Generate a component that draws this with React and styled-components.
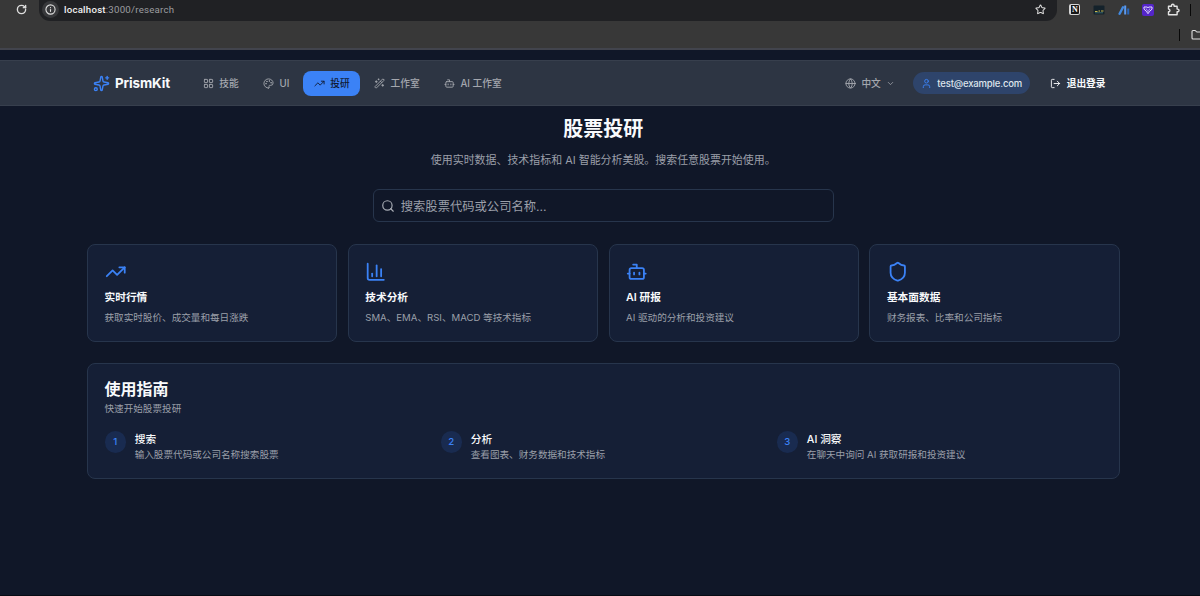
import React from "react";
import styled, { createGlobalStyle } from "styled-components";
import {
  Bot,
  ChartColumn,
  ChevronDown,
  Folder,
  Globe,
  Info,
  LayoutGrid,
  LogOut,
  Palette,
  RotateCw,
  Search,
  Shield,
  Sparkles,
  Star,
  TrendingUp,
  User,
  WandSparkles,
} from "lucide-react";

const colors = {
  page: "#101728",
  header: "#2d3543",
  card: "#151f36",
  border: "#27354c",
  primary: "#3b82f6",
  white: "#f8fafc",
  muted: "#9b9fa9",
};

const navItems = [
  { label: "技能", icon: LayoutGrid },
  { label: "UI", icon: Palette },
  { label: "投研", icon: TrendingUp, active: true },
  { label: "工作室", icon: WandSparkles },
  { label: "AI 工作室", icon: Bot },
];

const features = [
  { icon: TrendingUp, title: "实时行情", text: "获取实时股价、成交量和每日涨跌" },
  {
    icon: ChartColumn,
    title: "技术分析",
    text: "SMA、EMA、RSI、MACD 等技术指标",
  },
  { icon: Bot, title: "AI 研报", text: "AI 驱动的分析和投资建议" },
  { icon: Shield, title: "基本面数据", text: "财务报表、比率和公司指标" },
];

const steps = [
  { title: "搜索", text: "输入股票代码或公司名称搜索股票" },
  { title: "分析", text: "查看图表、财务数据和技术指标" },
  { title: "AI 洞察", text: "在聊天中询问 AI 获取研报和投资建议" },
];

const BrowserChrome = () => (
  <StyledChrome>
    <StyledToolbar>
      <StyledReload>
        <RotateCw size={11} strokeWidth={3} />
      </StyledReload>
      <StyledAddress>
        <StyledSiteInfo>
          <Info size={11} strokeWidth={2.4} />
        </StyledSiteInfo>
        <StyledUrl>
          <b>localhost</b>:3000/research
        </StyledUrl>
        <Star size={11} strokeWidth={2.2} />
      </StyledAddress>
      <StyledExtensions>
        <StyledNotion>N</StyledNotion>
        <svg width="12" height="12" viewBox="0 0 12 12">
          <rect x="0.5" y="1.5" width="11" height="9" rx="1" fill="#14222b" />
          <path d="M2 7.5h2.5M5.5 7h1.5M8 7h2.5" stroke="#c8b94d" />
          <path d="M2 8.8h8" stroke="#42767f" strokeWidth="0.8" />
        </svg>
        <svg width="12" height="12" viewBox="0 0 12 12">
          <path d="M1.6 9.8L5 3.2" stroke="#4289df" strokeWidth="2.4" strokeLinecap="round" />
          <path d="M7.2 1.5v9" stroke="#5b9af0" strokeWidth="2" />
          <path d="M10.2 4.5v6" stroke="#2865b8" strokeWidth="2" />
        </svg>
        <svg width="12" height="12" viewBox="0 0 12 12" fill="none">
          <rect width="12" height="12" rx="2" fill="#5425c9" />
          <path d="M2 3h3l1 .7L7 3h3v2.2L7.6 7.4 6 9.7 4.4 7.4 2 5.2z" stroke="#e4dcff" />
          <path d="M3.8 4.8l1.4.8M8.2 4.8l-1.4.8M4.6 7h2.8" stroke="#e4dcff" strokeWidth="0.8" />
        </svg>
        <svg width="13" height="13" viewBox="0 0 13 13" fill="none">
          <path
            d="M1.5 3.2h3V2.6a1.3 1.3 0 0 1 2.6 0v.6h3v2.9h.6a1.3 1.3 0 0 1 0 2.6h-.6v3H1.5V8.8h.4a1.4 1.4 0 0 0 0-2.7h-.4z"
            stroke="#e3e3e3"
            strokeWidth="1.4"
            strokeLinejoin="round"
          />
        </svg>
      </StyledExtensions>
      <StyledSeparator />
    </StyledToolbar>
    <StyledBookmarks>
      <StyledSeparator />
      <Folder size={12} strokeWidth={2.2} />
    </StyledBookmarks>
  </StyledChrome>
);

const Header = () => (
  <StyledHeader>
    <StyledLogo>
      <Sparkles size={17} color={colors.primary} />
      PrismKit
    </StyledLogo>
    <StyledNav>
      {navItems.map(({ label, icon: Icon, active }) => (
        <StyledNavItem key={label} $active={active}>
          <Icon size={11} />
          {label}
        </StyledNavItem>
      ))}
    </StyledNav>
    <StyledLanguage>
      <Globe size={11} />
      中文
      <ChevronDown size={9} />
    </StyledLanguage>
    <StyledUser>
      <User size={11} color={colors.primary} />
      test@example.com
    </StyledUser>
    <StyledLogout>
      <LogOut size={11} />
      退出登录
    </StyledLogout>
  </StyledHeader>
);

const App = () => (
  <StyledPage>
    <GlobalStyle />
    <BrowserChrome />
    <Header />
    <StyledMain>
      <Title>股票投研</Title>
      <Subtitle>
        使用实时数据、技术指标和 AI 智能分析美股。搜索任意股票开始使用。
      </Subtitle>
      <StyledSearch>
        <Search size={14} />
        <StyledInput placeholder="搜索股票代码或公司名称..." />
      </StyledSearch>
      <StyledFeatures>
        {features.map(({ icon: Icon, title, text }) => (
          <StyledCard key={title}>
            <Icon size={21.5} color={colors.primary} />
            <CardTitle>{title}</CardTitle>
            <Text>{text}</Text>
          </StyledCard>
        ))}
      </StyledFeatures>
      <StyledGuide>
        <GuideTitle>使用指南</GuideTitle>
        <Text>快速开始股票投研</Text>
        <StyledSteps>
          {steps.map(({ title, text }, index) => (
            <StyledStep key={title}>
              <StepNumber>{index + 1}</StepNumber>
              <div>
                <StepTitle>{title}</StepTitle>
                <Text>{text}</Text>
              </div>
            </StyledStep>
          ))}
        </StyledSteps>
      </StyledGuide>
    </StyledMain>
  </StyledPage>
);

export default App;

const GlobalStyle = createGlobalStyle`
  * {
    box-sizing: border-box;
  }

  body {
    margin: 0;
    background: ${colors.page};
    overflow: hidden;
  }

  h1, h2, h3, p {
    margin: 0;
  }

  svg {
    display: block;
    flex-shrink: 0;
  }
`;

const StyledPage = styled.div`
  height: 596px;
  overflow: hidden;
  border-bottom: 1px solid #070b14;
  background: ${colors.page};
  color: ${colors.white};
  font-family: Inter, "Noto Sans CJK SC", sans-serif;
  white-space: nowrap;
`;

const StyledChrome = styled.div`
  height: 50px;
  background: #383838;
  border-bottom: 2px solid #42444d;
  color: #dedede;
`;

const StyledToolbar = styled.div`
  display: flex;
  align-items: flex-start;
  height: 21px;
  padding-left: 16px;
`;

const StyledReload = styled.div`
  width: 23px;
  padding-top: 4px;
`;

const StyledAddress = styled.div`
  display: flex;
  align-items: center;
  width: 1018px;
  height: 21px;
  padding: 0 11px 2px 3px;
  border-radius: 0 0 11px 11px;
  background: #202124;
`;

const StyledSiteInfo = styled.div`
  display: flex;
  align-items: center;
  justify-content: center;
  width: 17px;
  height: 17px;
  margin-right: 5px;
  border-radius: 50%;
  background: #37383b;
`;

const StyledUrl = styled.div`
  flex: 1;
  color: #9c9da0;
  font-family: Roboto, sans-serif;
  font-size: 9.7px;
  letter-spacing: 0.22px;

  b {
    color: #f1f1f1;
    font-weight: 500;
  }
`;

const StyledExtensions = styled.div`
  display: flex;
  align-items: center;
  gap: 12.8px;
  height: 19px;
  margin-left: 12px;
`;

const StyledNotion = styled.div`
  width: 11px;
  height: 11px;
  border: 1px solid #d5d5d5;
  border-left-width: 2px;
  border-radius: 2px;
  color: #fff;
  background: #171717;
  font: bold 8px/9px "Liberation Serif", serif;
  text-align: center;
`;

const StyledSeparator = styled.div`
  flex-shrink: 0;
  width: 1px;
  height: 12px;
  margin: 4px 0 0 10px;
  background: #080808;
`;

const StyledBookmarks = styled.div`
  display: flex;
  align-items: center;
  gap: 11px;
  height: 27px;
  padding-left: 1169px;
  overflow: hidden;

  ${StyledSeparator} {
    margin-top: 1px;
  }
`;

const StyledHeader = styled.header`
  display: flex;
  align-items: center;
  height: 46px;
  margin-top: 10px;
  padding: 0 94.5px 0 93px;
  border: solid #373f4d;
  border-width: 1px 0;
  background: ${colors.header};
`;

const StyledLogo = styled.div`
  display: flex;
  align-items: center;
  gap: 5px;
  width: 99px;
  font-size: 13.4px;
  font-weight: 700;
  letter-spacing: -0.1px;
`;

const StyledNav = styled.nav`
  display: flex;
  flex: 1;
  gap: 2.8px;
`;

const StyledNavItem = styled.a`
  display: flex;
  align-items: center;
  gap: 5.5px;
  height: 25px;
  padding: 0 10.8px;
  border-radius: 8px;
  background: ${({ $active }) => ($active ? colors.primary : "transparent")};
  color: ${({ $active }) => ($active ? "#101b32" : "#a4a7ae")};
  font-size: 9.7px;
  font-weight: 500;
`;

const StyledLanguage = styled.div`
  display: flex;
  align-items: center;
  gap: 5.5px;
  margin-right: 18px;
  color: #a4a7ae;
  font-size: 9.7px;
  font-weight: 500;
`;

const StyledUser = styled.div`
  display: flex;
  align-items: center;
  gap: 5px;
  width: 117px;
  height: 22px;
  margin-right: 20px;
  padding-left: 8px;
  border-radius: 11px;
  background: #2e446b;
  color: #dfe4ec;
  font-size: 9.5px;
  font-weight: 500;
  letter-spacing: -0.15px;
`;

const StyledLogout = styled.div`
  display: flex;
  align-items: center;
  gap: 5.5px;
  font-size: 9.7px;
  font-weight: 600;
`;

const StyledMain = styled.main`
  width: 1032.5px;
  margin-left: 87px;
  padding-top: 8px;
`;

const Title = styled.h1`
  height: 30px;
  line-height: 31px;
  font-size: 20px;
  font-weight: 600;
  text-align: center;
`;

const Subtitle = styled.p`
  height: 18px;
  margin-top: 7px;
  line-height: 19px;
  color: ${colors.muted};
  font-size: 10.95px;
  text-align: center;
`;

const StyledSearch = styled.div`
  display: flex;
  align-items: center;
  gap: 6px;
  width: 461px;
  height: 33px;
  margin: 20px auto 22px;
  padding: 0 7px;
  border: 1px solid ${colors.border};
  border-radius: 6px;
  color: #a9adb5;
`;

const StyledInput = styled.input`
  flex: 1;
  padding: 2px 0 0;
  border: 0;
  outline: 0;
  background: transparent;
  color: ${colors.white};
  font-family: inherit;
  font-size: 12.3px;

  &::placeholder {
    color: ${colors.muted};
  }
`;

const StyledFeatures = styled.div`
  display: grid;
  grid-template-columns: repeat(4, 1fr);
  gap: 10.7px;
`;

const StyledCard = styled.div`
  height: 98px;
  padding: 16px 16.5px;
  border: 1px solid ${colors.border};
  border-radius: 8px;
  background: ${colors.card};
`;

const CardTitle = styled.h3`
  margin: 7.5px 0 5px;
  line-height: 16px;
  font-size: 10.7px;
  font-weight: 600;
`;

const Text = styled.p`
  line-height: 14px;
  color: ${colors.muted};
  font-size: 9.6px;
`;

const StyledGuide = styled.section`
  height: 116px;
  margin-top: 21px;
  padding: 14px 16.5px;
  border: 1px solid ${colors.border};
  border-radius: 8px;
  background: ${colors.card};
`;

const GuideTitle = styled.h2`
  height: 24px;
  line-height: 23px;
  font-size: 16px;
  font-weight: 600;
`;

const StyledSteps = styled.div`
  display: grid;
  grid-template-columns: repeat(3, 1fr);
  gap: 10.7px;
  margin-top: 15px;
`;

const StyledStep = styled.div`
  display: flex;
  gap: 8.7px;
`;

const StepNumber = styled.div`
  width: 21.5px;
  height: 21.5px;
  border-radius: 50%;
  background: #192b50;
  color: ${colors.primary};
  font-size: 9.6px;
  font-weight: 500;
  line-height: 22px;
  text-align: center;
`;

const StepTitle = styled.h3`
  margin-top: 1px;
  line-height: 16px;
  font-size: 10.7px;
  font-weight: 500;
`;
